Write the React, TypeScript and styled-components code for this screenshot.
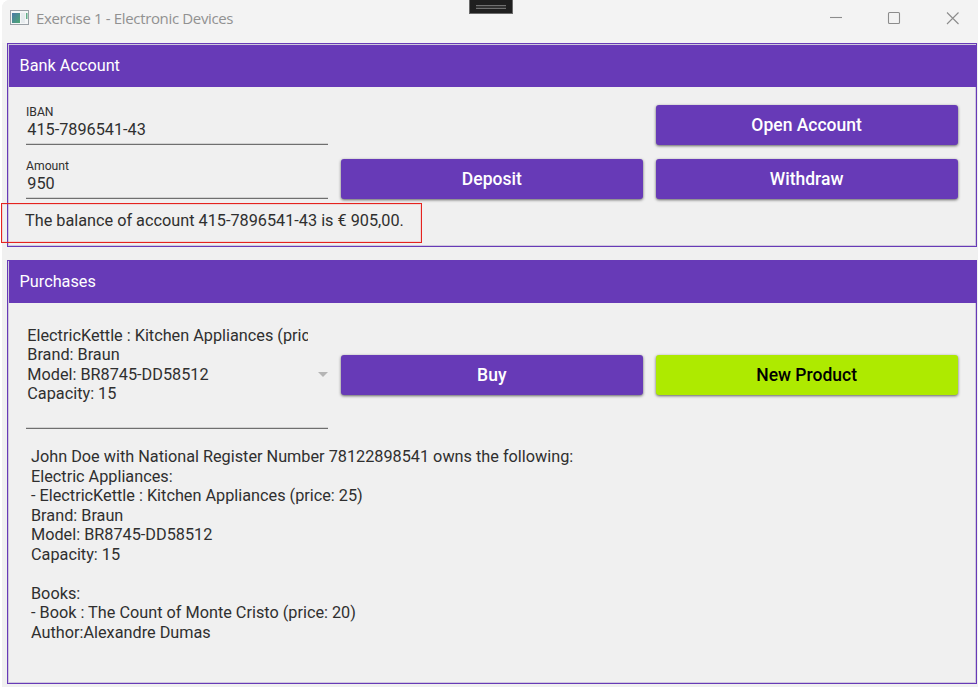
import React from "react";
import styled, { createGlobalStyle } from "styled-components";

const PURPLE = "#673ab7";
const LIME = "#aeea00";

const GlobalStyle = createGlobalStyle`
  * { box-sizing: border-box; }
  body { margin: 0; background: #fff; overflow: hidden; }
  button, input { font: inherit; }
`;

const Window = styled.div`
  position: relative;
  width: 976px;
  height: 687px;
  margin-left: 2px;
  background: #f0f0f0;
  border-top-left-radius: 8px;
  color: #2f2f2f;
  font-family: Roboto, sans-serif;
  font-size: 16.25px;
  line-height: 19.5px;
  display: flex;
  flex-direction: column;
`;

const TitleBar = styled.header`
  flex: none;
  height: 43px;
  padding: 8px 20px 0 8px;
  display: flex;
  align-items: flex-start;
  background: #f3f3f3;
  border-top-left-radius: 8px;
`;

const AppIcon = styled.svg`
  width: 19px;
  height: 16px;
  margin-top: 2px;
`;

const Title = styled.h1`
  flex: 1;
  margin: 0 0 0 7px;
  font: 400 15px/21px "Open Sans", "Noto Sans", sans-serif;
  letter-spacing: -0.35px;
  color: #919191;
`;

const Controls = styled.div`
  display: flex;
  gap: 46px;
  margin-top: 4px;
`;

const ControlIcon = styled.svg`
  width: 12px;
  height: 12px;
  overflow: visible;
  fill: none;
  stroke: #8c8c8c;
  stroke-width: 1.1;
`;

const Grip = styled.div`
  position: absolute;
  top: 0;
  left: 467px;
  width: 44px;
  height: 14px;
  background: #1f1f1f;
  border: 1px solid #6a6a6a;
  border-top: 0;
  display: flex;
  justify-content: center;
  padding-top: 5px;
`;

const GripBar = styled.div`
  width: 30px;
  height: 4px;
  background: #333;
  border: solid #707070;
  border-width: 1px 0;
`;

const Panel = styled.section<{ $height: number }>`
  flex: none;
  height: ${(p) => p.$height}px;
  margin: 0 1px 0 5px;
  border: 1px solid ${PURPLE};
  box-shadow: inset 0 0 0 1px #cfc8dd;
`;

const PanelHeader = styled.h2<{ $flush?: boolean }>`
  margin: ${(p) => (p.$flush ? 0 : 1)}px 0 0 1px;
  height: 42px;
  padding: 0 10.6px;
  background: ${PURPLE};
  color: #fff;
  font-size: 16.25px;
  font-weight: 450;
  line-height: 42px;
`;

const FormGrid = styled.div<{ $top: number; $rowGap?: number }>`
  display: grid;
  grid-template-columns: repeat(3, 302px);
  column-gap: 12.8px;
  row-gap: ${(p) => p.$rowGap ?? 0}px;
  padding: ${(p) => p.$top}px 0 0 18px;
`;

const Field = styled.label`
  display: flex;
  flex-direction: column;
  height: 41px;
  border-bottom: 1px solid #6f6f6f;
  box-shadow: inset 0 -1px #d2d2d2;
`;

const FieldLabel = styled.span`
  font-size: 12.2px;
  line-height: 17px;
`;

const FieldInput = styled.input`
  padding: 0 0 0 1.3px;
  width: 100%;
  height: 20px;
  margin-top: -2px;
  border: 0;
  outline: 0;
  background: none;
  color: inherit;
`;

const Action = styled.button<{ $accent?: boolean; $column?: number }>`
  grid-column: ${(p) => p.$column ?? "auto"};
  align-self: ${(p) => (p.$column ? "end" : "center")};
  height: 40px;
  padding: 0;
  border: 0;
  border-radius: 3px;
  background: ${(p) => (p.$accent ? LIME : PURPLE)};
  color: ${(p) => (p.$accent ? "#000" : "#fff")};
  font-size: 17.5px;
  font-weight: ${(p) => (p.$accent ? 500 : 550)};
  line-height: 40px;
  box-shadow: 0 1px 3px rgba(0, 0, 0, 0.6);
`;

const Balance = styled.p`
  margin: 12px 0 0 17px;
`;

const Highlight = styled.div`
  position: absolute;
  top: 203px;
  left: -1px;
  width: 421px;
  height: 40px;
  border: 1px solid #e5231f;
  box-shadow: inset 0 0 0 1px rgba(229, 35, 31, 0.12);
`;

const Combo = styled.div`
  display: flex;
  align-items: center;
  height: 108px;
  border-bottom: 1px solid #6f6f6f;
  box-shadow: inset 0 -1px #d2d2d2;
`;

const ComboValue = styled.div`
  width: 282px;
  height: 98px;
  padding-left: 1.3px;
  margin-right: 10px;
  overflow: hidden;
  white-space: pre;
`;

const Arrow = styled.svg`
  width: 10px;
  height: 5px;
  margin-bottom: 1px;
  fill: #b5b5b5;
`;

const Summary = styled.div`
  margin: 18px 0 0 23px;
  white-space: pre;
`;

const Spacer = styled.div`
  flex: none;
  height: 13px;
`;

const product = `ElectricKettle : Kitchen Appliances (price: 25)
Brand: Braun
Model: BR8745-DD58512
Capacity: 15`;

const summary = `John Doe with National Register Number 78122898541 owns the following:
Electric Appliances:
- ${product}

Books:
- Book : The Count of Monte Cristo (price: 20)
Author:Alexandre Dumas`;

export default function App() {
  return (
    <>
      <GlobalStyle />
      <Window>
        <TitleBar>
          <AppIcon viewBox="0 0 19 16">
            <defs>
              <linearGradient id="screen" x1="0" y1="0" x2="1" y2="1">
                <stop offset="0" stopColor="#4a78a8" />
                <stop offset="1" stopColor="#4da873" />
              </linearGradient>
            </defs>
            <rect x="0.5" y="0.5" width="18" height="14" fill="#f4f6f7" stroke="#9aa0a6" />
            <rect x="2" y="3" width="8" height="10" fill="url(#screen)" />
            <rect x="11" y="3" width="4" height="10" fill="#e6ebee" />
            <rect x="16" y="3" width="1.5" height="6" fill="#62ad8a" />
          </AppIcon>
          <Title>Exercise 1 - Electronic Devices</Title>
          <Controls>
            <ControlIcon><path d="M0 5.5H12" /></ControlIcon>
            <ControlIcon><rect x="0.5" y="0.5" width="11" height="11" rx="1" /></ControlIcon>
            <ControlIcon><path d="M1 0.5L12.5 12M12.5 0.5L1 12" /></ControlIcon>
          </Controls>
        </TitleBar>
        <Panel $height={204}>
          <PanelHeader>Bank Account</PanelHeader>
          <FormGrid $top={17} $rowGap={13}>
            <Field>
              <FieldLabel>IBAN</FieldLabel>
              <FieldInput defaultValue="415-7896541-43" />
            </Field>
            <Action $column={3}>Open Account</Action>
            <Field>
              <FieldLabel>Amount</FieldLabel>
              <FieldInput defaultValue="950" />
            </Field>
            <Action $column={2}>Deposit</Action>
            <Action $column={3}>Withdraw</Action>
          </FormGrid>
          <Balance>The balance of account 415-7896541-43 is € 905,00.</Balance>
        </Panel>
        <Spacer />
        <Panel $height={424}>
          <PanelHeader $flush>Purchases</PanelHeader>
          <FormGrid $top={18}>
            <Combo>
              <ComboValue>{product}</ComboValue>
              <Arrow viewBox="0 0 10 5"><path d="M0 0H10L5 5Z" /></Arrow>
            </Combo>
            <Action>Buy</Action>
            <Action $accent>New Product</Action>
          </FormGrid>
          <Summary>{summary}</Summary>
        </Panel>
        <Grip><GripBar /></Grip>
        <Highlight />
      </Window>
    </>
  );
}
